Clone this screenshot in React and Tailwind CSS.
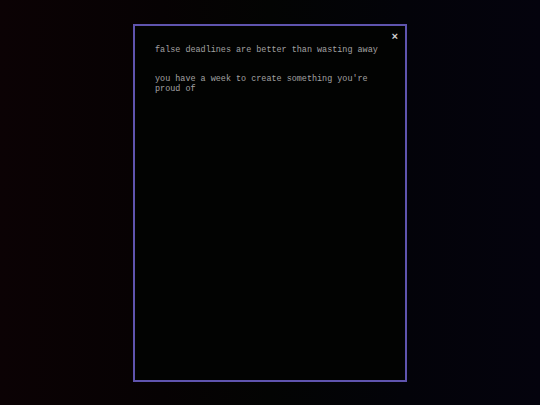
export default function App() {
  return (
    <div className="w-[540px] h-[405px] flex items-center justify-center bg-[linear-gradient(to_right,#0b0204_0%,#060203_30%,#030403_50%,#030309_75%,#04030d_100%)]">
      <div className="w-[274px] h-[358px] border-2 border-[#5f54ae] bg-[#020302] px-[20px] pt-[6px] flex flex-col font-['Liberation_Mono',monospace] text-[8.45px] leading-[10px] text-[#a2a2a2]">
        <div className="flex justify-end mr-[-13px] h-[10px]">
          <span className="text-[11px] leading-[10px] font-bold text-[#d0d0d0]">×</span>
        </div>
        <p className="mt-[3px]">false deadlines are better than wasting away</p>
        <p className="mt-[19px] pr-[4px]">you have a week to create something you're proud of</p>
      </div>
    </div>
  );
}
